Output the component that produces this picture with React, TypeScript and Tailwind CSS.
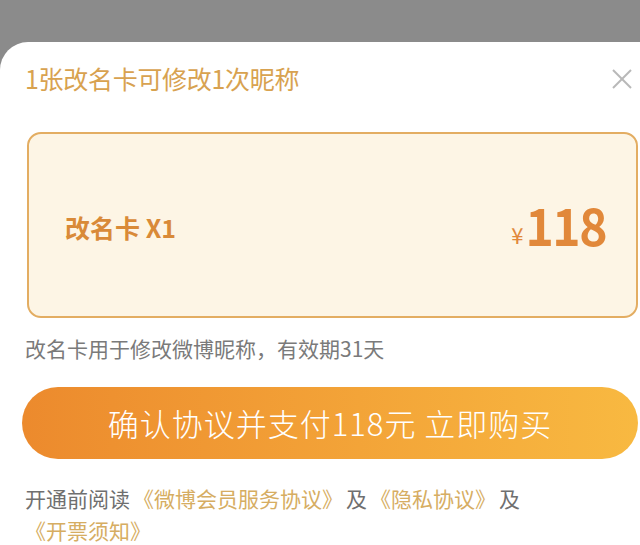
const FONT = "font-['Noto_Sans_CJK_SC','Noto_Sans',sans-serif]";

function CloseIcon() {
  return (
    <svg width="22" height="22" viewBox="0 0 22 22" fill="none" stroke="#b8b8b8" strokeWidth="2" aria-hidden="true">
      <line x1="2" y1="2" x2="20" y2="20" />
      <line x1="20" y1="2" x2="2" y2="20" />
    </svg>
  );
}

export default function App() {
  return (
    <div className={`w-[640px] h-[545px] bg-[#8b8b8b] pt-[42px] overflow-hidden ${FONT}`}>
      <div className="bg-white rounded-tl-[28px] h-full pl-[25px] pr-[2px] pt-[20px]">
        <div className="flex items-center justify-between h-[32px]">
          <span className="text-[25px] leading-[32px] text-[#d8a250] tracking-[-0.3px]">1张改名卡可修改1次昵称</span>
          <span className="mr-[5px] mt-[2px]">
            <CloseIcon />
          </span>
        </div>

        <div className="mt-[38px] ml-[2px] h-[186px] rounded-[14px] border-2 border-[#e3ad62] bg-[#fdf5e5] flex items-center justify-between pl-[36px] pr-[30px]">
          <span className="text-[25px] font-semibold text-[#d98a38] mt-[6px]">改名卡 X1</span>
          <span className="flex items-baseline text-[#e1883a]">
            <span className="text-[22px] mr-[2px]">¥</span>
            <span className="text-[48px] font-bold leading-none tracking-[-1.5px] scale-y-[1.08]">118</span>
          </span>
        </div>

        <p className="mt-[16px] text-[21px] leading-[28px] text-[#7a7a7a]">改名卡用于修改微博昵称，有效期31天</p>

        <button
          type="button"
          className="mt-[25px] -ml-[3px] w-[616px] h-[72px] rounded-full bg-gradient-to-r from-[#ec8a2d] to-[#f8b941] text-white text-[31px] font-light tracking-[1px] flex items-center justify-center"
        >
          确认协议并支付118元 立即购买
        </button>

        <div className="mt-[23px] text-[21px] leading-[32px] text-[#6f6f6f]">
          <p>
            开通前阅读<span className="ml-[3px] text-[#d6ad62]">《微博会员服务协议》</span>
            <span className="mx-[3px]">及</span>
            <span className="text-[#d6ad62]">《隐私协议》</span>
            <span className="ml-[3px]">及</span>
          </p>
          <p className="text-[#d6ad62]">《开票须知》</p>
        </div>
      </div>
    </div>
  );
}
